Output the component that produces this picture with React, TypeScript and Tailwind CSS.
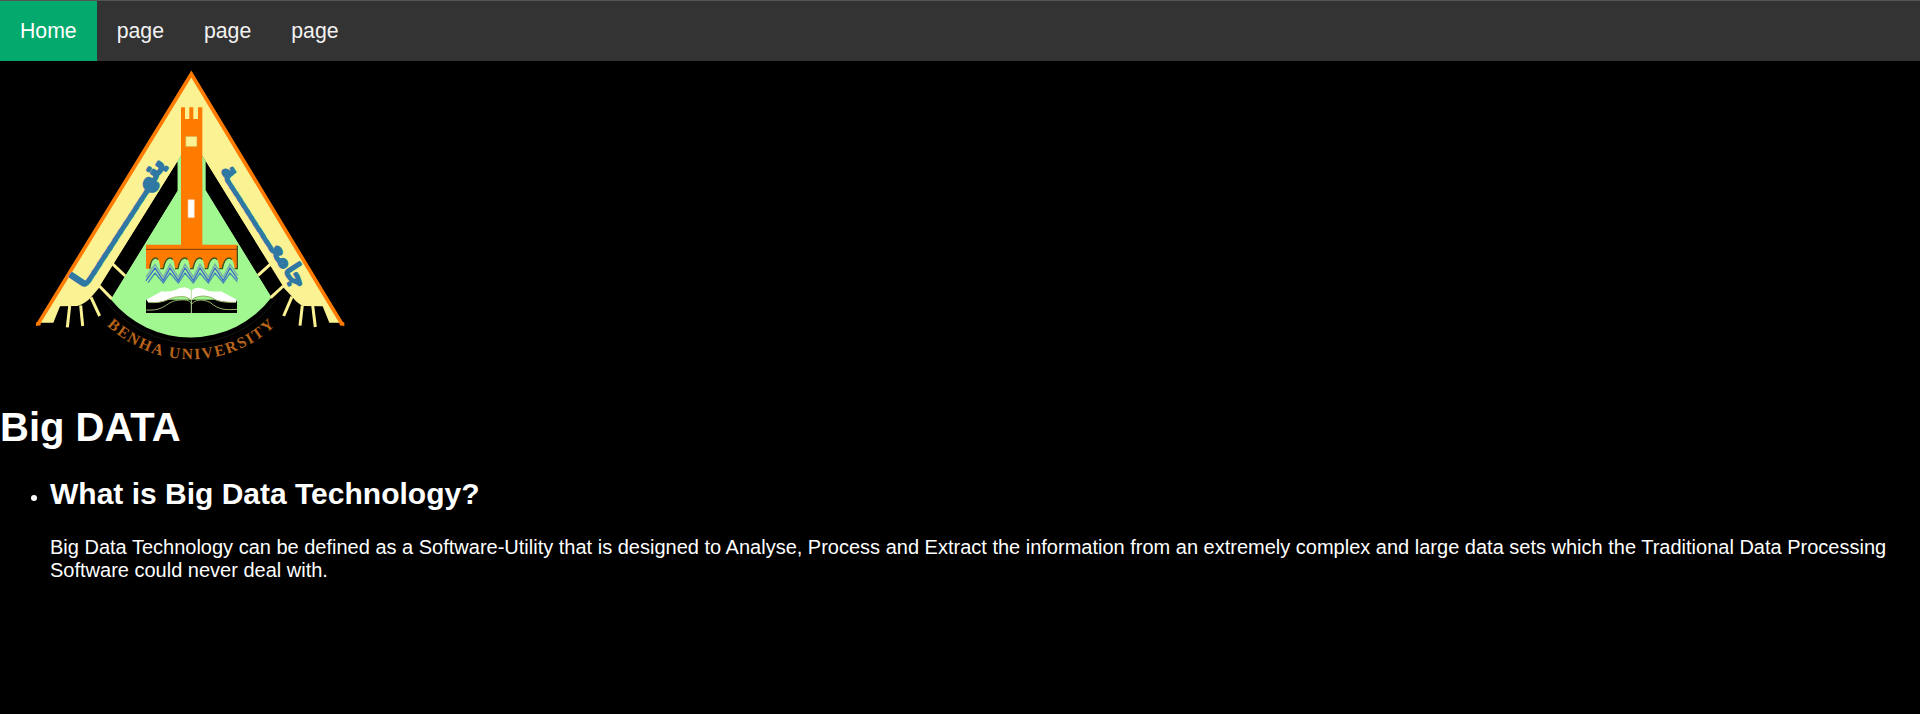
const spokes = [
  "M276 610 316 648", "M238 678 275 716", "M213 712 239 768", "M182 736 188 798", "M149 738 142 802",
  "M754 610 714 646", "M790 678 752 713", "M816 710 791 768", "M847 736 840 797", "M878 736 886 801",
];

const wave = "l27-38 25 38 20-38 25 38 20-38 25 38 20-38 25 38 20-38 25 38 20-38 23 34";

function Emblem() {
  return (
    <svg className="block h-[309px] w-[340px]" viewBox="0 3 1020 927" role="img" aria-label="Benha University">
      <path
        d="M514 42 966 788H928L908 739 850 738Q830 730 818 712L788 680 547 288H483L240 680 213 712Q198 730 172 738L120 739 100 788H55Z"
        fill="#faf293"
      />
      <path d="M53 794 514 42 967 794" fill="none" stroke="#ff7b00" strokeWidth="11" strokeLinejoin="miter" />
      <path d="M48 798V788L56 784 62 788V796ZM973 798V788L965 784 959 788V796Z" fill="#ff7b00" />
      <path d="M472 304 483 288H547L557 304V390L755 712A307 307 0 0 1 272 718L472 392Z" fill="#a1f790" />
      <path d="M472 306V392L272 718 238 680ZM558 306V390L755 712 790 680Z" fill="#000" />
      <g fill="none" stroke="#faf293" strokeWidth="9">
        {spokes.map((d) => (
          <path key={d} d={d} />
        ))}
      </g>
      <path d="M258 722A318 318 0 0 0 770 716" fill="none" stroke="#151515" strokeWidth="3" />

      <path d="M483 142H495V177H508V142H520V177H534V142H547V556H483Z" fill="#ff7b00" />
      <path d="M497 229H531V260H497Z" fill="#faf293" stroke="#d9a040" strokeWidth="2" />
      <path d="M504 419H523V473H504Z" fill="#fff" stroke="#ffc38a" strokeWidth="2" />

      <path
        d="M378 554H652V626H644C642 604 636 594 627 594S611 604 607 626H598C596 604 592 594 583 594S567 604 563 626H554C552 604 548 594 539 594S523 604 519 626H510C508 604 503 594 494 594S478 604 474 626H465C463 604 459 594 450 594S434 604 430 626H421C419 604 415 594 406 594S392 604 389 626H378Z"
        fill="#ff7b00"
      />
      <g fill="none" stroke="#43521f" strokeWidth="4">
        <path d="M652 557V626H644" />
        <path d="M378 568H652" stroke="#7a3b00" strokeWidth="3" />
        <path d="M389 626C392 604 397 594 406 594q5 0 8 5M421 626h9C434 604 441 594 450 594q5 0 8 5M465 626h9C478 604 485 594 494 594q5 0 8 5M510 626h9C523 604 530 594 539 594q5 0 8 5M554 626h9C567 604 574 594 583 594q5 0 8 5M598 626h9C611 604 618 594 627 594q5 0 8 5" />
      </g>
      <g fill="none" strokeWidth="4">
        <path d={"M378 651" + wave} stroke="#78acaa" />
        <path d={"M378 662" + wave} stroke="#4166cc" />
        <path d="M384 668l21-29 25 30 20-30 25 30 20-30 25 30 20-30 25 30 20-30 25 30 20-30 22 26" stroke="#4385ba" />
      </g>

      <path d="M378 719H651V759H378Z" fill="#000" />
      <path
        d="M379 719 425 694Q448 696 464 691 480 682 494 682 508 684 514 692 522 683 536 683 552 685 565 693 585 696 603 694L651 719 648 727Q610 727 590 720 565 704 540 708 520 712 515 722 504 708 482 709 464 709 446 718 420 731 384 726Z"
        fill="#fff"
      />
      <g fill="none" stroke="#9bb66c" strokeWidth="3">
        <path d="M379 750C440 754 437 722 480 720 502 718 512 724 515 733 522 719 548 716 570 727 598 751 618 750 651 748" />
        <path d="M514 690V759" stroke="#b9dba0" />
        <path d="M384 727Q420 731 446 718 464 709 482 710 504 709 515 722 520 712 540 709 565 705 590 721 610 728 648 727" />
      </g>

      <g
        fill="#2f78a4"
        stroke="#2f78a4"
        strokeWidth="8"
        strokeLinejoin="round"
        className="font-['DejaVu_Sans',sans-serif]"
      >
        <text transform="translate(193 688) rotate(-57)" fontSize="75" textLength="450" lengthAdjust="spacingAndGlyphs">
          بنهـــــــــــ‍ا
        </text>
        <text transform="translate(600 332) rotate(57.5)" fontSize="70" textLength="422" lengthAdjust="spacingAndGlyphs">
          جامعـــــــــــة
        </text>
      </g>

      <path id="motto" d="M261 796A365 365 0 0 0 778 784" fill="none" />
      <text fontSize="47" letterSpacing="5.6" fill="#b9641b" className="font-['Liberation_Serif',serif] font-bold">
        <textPath href="#motto">BENHA UNIVERSITY</textPath>
      </text>
    </svg>
  );
}

export default function App() {
  return (
    <div className="min-h-[714px] bg-black font-['Liberation_Sans',Arial,sans-serif] text-xl leading-[23px] text-white">
      <nav className="flex h-[61px] border-t border-[#555] bg-[#333] text-[21.25px] leading-6 text-[#f2f2f2]">
        <a className="flex items-center bg-[#04aa6d] px-5 text-white" href="#home">Home</a>
        <a className="flex items-center px-5" href="#page1">page</a>
        <a className="flex items-center px-5" href="#page2">page</a>
        <a className="flex items-center px-5" href="#page3">page</a>
      </nav>
      <div className="pl-5">
        <Emblem />
      </div>
      <h1 className="mt-[34px] text-[40px] leading-[46px] font-bold">Big DATA</h1>
      <ul className="mt-[26px]">
        <li className="flex">
          <span className="mt-[19px] mr-[13px] ml-[31px] size-1.5 shrink-0 rounded-full bg-white" />
          <div>
            <h2 className="text-[30px] leading-[35px] font-bold">What is Big Data Technology?</h2>
            <p className="mt-[25px]">
              Big Data Technology can be defined as a Software-Utility that is designed to Analyse, Process and Extract the
              information from an extremely complex and large data sets which the Traditional Data Processing Software could
              never deal with.
            </p>
          </div>
        </li>
      </ul>
    </div>
  );
}
